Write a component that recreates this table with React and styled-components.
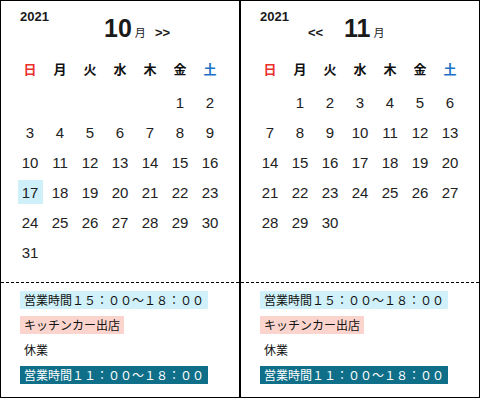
import React from "react";
import styled, { createGlobalStyle } from "styled-components";

const GlobalStyle = createGlobalStyle`
  html, body {
    margin: 0;
    padding: 0;
    background: #ffffff;
  }
  body {
    font-family: "Liberation Sans", "Noto Sans CJK JP", sans-serif;
    color: #1a1a1a;
  }
`;

const WEEKDAYS = ["日", "月", "火", "水", "木", "金", "土"];

const EVENTS = [
  { label: "営業時間１５：００〜１８：００", kind: "open" },
  { label: "キッチンカー出店", kind: "truck" },
  { label: "休業", kind: "closed" },
  { label: "営業時間１１：００〜１８：００", kind: "full" },
];

const MONTHS = [
  { year: 2021, month: 10, offset: 5, days: 31, prev: false, next: true, today: 17 },
  { year: 2021, month: 11, offset: 1, days: 30, prev: true, next: false },
];

function buildCells(offset, days) {
  const cells = [];
  for (let i = 0; i < offset; i++) cells.push(null);
  for (let d = 1; d <= days; d++) cells.push(d);
  return cells;
}

export default function App() {
  return (
    <>
      <GlobalStyle />
      <Wrap>
        {MONTHS.map((m) => (
          <Calendar key={m.month} {...m} />
        ))}
      </Wrap>
    </>
  );
}

function Calendar({ year, month, offset, days, prev, next, today }) {
  const cells = buildCells(offset, days);
  return (
    <Panel>
      <MonthArea>
        <Header>
          <Year>{year}</Year>
          <Nav>
            <Arrow $hidden={!prev}>&lt;&lt;</Arrow>
            <MonthLabel>
              {month}
              <small>月</small>
            </MonthLabel>
            <Arrow $hidden={!next}>&gt;&gt;</Arrow>
          </Nav>
        </Header>
        <WeekRow>
          {WEEKDAYS.map((w, i) => (
            <WeekDay key={w} $tone={i === 0 ? "sun" : i === 6 ? "sat" : "day"}>
              {w}
            </WeekDay>
          ))}
        </WeekRow>
        <DayGrid>
          {cells.map((d, i) => (
            <DayCell key={i}>
              {d && <DayNum $today={d === today}>{d}</DayNum>}
            </DayCell>
          ))}
        </DayGrid>
      </MonthArea>
      <EventList>
        {EVENTS.map((e) => (
          <EventTag key={e.label} $kind={e.kind}>
            {e.label}
          </EventTag>
        ))}
      </EventList>
    </Panel>
  );
}

const Wrap = styled.div`
  display: flex;
  width: 480px;
  height: 398px;
`;

const Panel = styled.section`
  box-sizing: border-box;
  width: 240px;
  height: 398px;
  border: 1px solid #000;
  display: flex;
  flex-direction: column;
`;

const MonthArea = styled.div`
  height: 281px;
  border-bottom: 1px dashed #000;
`;

const Header = styled.div`
  display: flex;
  align-items: flex-start;
  height: 52px;
  padding: 8px 0 0 19px;
  box-sizing: border-box;
`;

const Year = styled.div`
  width: 48px;
  font-size: 13px;
  font-weight: bold;
  line-height: 16px;
`;

const Nav = styled.div`
  display: flex;
  align-items: baseline;
  margin-top: 4px;
`;

const Arrow = styled.span`
  width: 36px;
  visibility: ${({ $hidden }) => ($hidden ? "hidden" : "visible")};
  font-size: 13px;
  font-weight: bold;
  &:last-child {
    width: auto;
  }
`;

const MonthLabel = styled.span`
  width: 51px;
  font-size: 25px;
  font-weight: bold;
  line-height: 30px;
  small {
    font-family: "Noto Sans CJK JP", sans-serif;
    font-size: 11px;
    font-weight: normal;
    margin-left: 3px;
  }
`;

const WeekRow = styled.div`
  display: grid;
  grid-template-columns: repeat(7, 30px);
  padding-left: 14px;
  height: 30px;
  margin-bottom: 4px;
`;

const toneColor = { sun: "#ec2f2a", sat: "#1a72c4", day: "#111" };

const WeekDay = styled.div`
  display: flex;
  align-items: center;
  justify-content: center;
  font-family: "Noto Sans CJK JP", sans-serif;
  font-size: 13px;
  font-weight: bold;
  color: ${({ $tone }) => toneColor[$tone]};
`;

const DayGrid = styled.div`
  display: grid;
  grid-template-columns: repeat(7, 30px);
  grid-auto-rows: 30px;
  padding-left: 14px;
`;

const DayCell = styled.div`
  display: flex;
  align-items: center;
  justify-content: center;
`;

const DayNum = styled.span`
  display: flex;
  align-items: center;
  justify-content: center;
  width: 25px;
  height: 24px;
  font-size: 15px;
  color: #222;
  background: ${({ $today }) => ($today ? "#cff0f8" : "transparent")};
`;

const eventBg = {
  open: "#d0f1fa",
  truck: "#fbd5cd",
  closed: "transparent",
  full: "#0f6f89",
};

const EventList = styled.div`
  display: flex;
  flex-direction: column;
  align-items: flex-start;
  gap: 7px;
  padding: 8px 0 0 19px;
`;

const EventTag = styled.span`
  height: 18px;
  line-height: 18px;
  padding: 0 4px;
  font-family: "Noto Sans CJK JP", sans-serif;
  font-size: 12px;
  color: ${({ $kind }) => ($kind === "full" ? "#fff" : "#111")};
  background: ${({ $kind }) => eventBg[$kind]};
`;
